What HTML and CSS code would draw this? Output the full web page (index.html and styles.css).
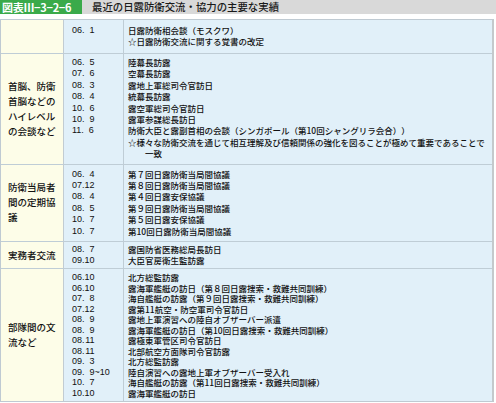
FILE: index.html
```html
<!DOCTYPE html>
<html lang="ja">
<head>
<meta charset="utf-8">
<link rel="stylesheet" href="styles.css">
</head>
<body>
<div class="header">
  <div class="fig">図表Ⅲ−3−2−6</div>
  <div class="title">最近の日露防衛交流・協力の主要な実績</div>
</div>
<div class="table">
  <div class="cat first r1"></div>
  <div class="dates first r1">
    <div>06.<span class="m">1</span></div>
  </div>
  <div class="items first r1">
    <div>日露防衛相会談（モスクワ）</div>
    <div>☆日露防衛交流に関する覚書の改定</div>
  </div>

  <div class="cat r2"><div>首脳、防衛<br>首脳などの<br>ハイレベル<br>の会談など</div></div>
  <div class="dates r2">
    <div>06.<span class="m">5</span></div>
    <div>07.<span class="m">6</span></div>
    <div>08.<span class="m">3</span></div>
    <div>08.<span class="m">4</span></div>
    <div>10.<span class="m">6</span></div>
    <div>10.<span class="m">9</span></div>
    <div>11.<span class="m">6</span></div>
  </div>
  <div class="items r2">
    <div>陸幕長訪露</div>
    <div>空幕長訪露</div>
    <div>露地上軍総司令官訪日</div>
    <div>統幕長訪露</div>
    <div>露空軍総司令官訪日</div>
    <div>露軍参謀総長訪日</div>
    <div>防衛大臣と露副首相の会談（シンガポール（第10回シャングリラ会合））</div>
    <div class="note">☆様々な防衛交流を通じて相互理解及び信頼関係の強化を図ることが極めて重要であることで<br>一致</div>
  </div>

  <div class="cat r3"><div>防衛当局者<br>間の定期協<br>議</div></div>
  <div class="dates r3">
    <div>06.<span class="m">4</span></div>
    <div>07.<span class="m">12</span></div>
    <div>08.<span class="m">4</span></div>
    <div>08.<span class="m">5</span></div>
    <div>10.<span class="m">7</span></div>
    <div>10.<span class="m">7</span></div>
  </div>
  <div class="items r3">
    <div>第７回日露防衛当局間協議</div>
    <div>第８回日露防衛当局間協議</div>
    <div>第４回日露安保協議</div>
    <div>第９回日露防衛当局間協議</div>
    <div>第５回日露安保協議</div>
    <div>第10回日露防衛当局間協議</div>
  </div>

  <div class="cat r4"><div>実務者交流</div></div>
  <div class="dates r4">
    <div>08.<span class="m">7</span></div>
    <div>09.<span class="m">10</span></div>
  </div>
  <div class="items r4">
    <div>露国防省医務総局長訪日</div>
    <div>大臣官房衛生監訪露</div>
  </div>

  <div class="cat r5"><div>部隊間の文<br>流など</div></div>
  <div class="dates r5">
    <div>06.<span class="m">10</span></div>
    <div>06.<span class="m">10</span></div>
    <div>07.<span class="m">8</span></div>
    <div>07.<span class="m">12</span></div>
    <div>08.<span class="m">9</span></div>
    <div>08.<span class="m">9</span></div>
    <div>08.<span class="m">11</span></div>
    <div>08.<span class="m">11</span></div>
    <div>09.<span class="m">3</span></div>
    <div>09.<span class="m">9</span>~10</div>
    <div>10.<span class="m">7</span></div>
    <div>10.<span class="m">10</span></div>
  </div>
  <div class="items r5">
    <div>北方総監訪露</div>
    <div>露海軍艦艇の訪日（第８回日露捜索・救難共同訓練）</div>
    <div>海自艦艇の訪露（第９回日露捜索・救難共同訓練）</div>
    <div>露第11航空・防空軍司令官訪日</div>
    <div>露地上軍演習への陸自オブザーバー派遣</div>
    <div>露海軍艦艇の訪日（第10回日露捜索・救難共同訓練）</div>
    <div>露極東軍管区司令官訪日</div>
    <div>北部航空方面隊司令官訪露</div>
    <div>北方総監訪露</div>
    <div>陸自演習への露地上軍オブザーバー受入れ</div>
    <div>海自艦艇の訪露（第11回日露捜索・救難共同訓練）</div>
    <div>露海軍艦艇の訪日</div>
  </div>
</div>
</body>
</html>
```

FILE: styles.css
```css
body {
  margin: 0;
  width: 496px;
  background: #ffffff;
  font-family: "Noto Sans CJK JP", "Liberation Sans", sans-serif;
  color: #111111;
  text-spacing-trim: space-all;
}

.header {
  display: flex;
  height: 14px;
  background: #d9d9d9;
}

.fig {
  width: 80px;
  padding-left: 2px;
  margin-right: 1px;
  background: #3aaa4a;
  color: #ffffff;
  font-size: 11px;
  line-height: 14px;
  font-weight: bold;
  letter-spacing: -0.3px;
  white-space: nowrap;
}

.title {
  padding-left: 9px;
  font-size: 10.4px;
  line-height: 14px;
  font-weight: 500;
  color: #1a1a1a;
  white-space: nowrap;
}

.table {
  margin-top: 5px;
  width: 494px;
  box-sizing: border-box;
  display: grid;
  grid-template-columns: 63px 60px 1fr;
  border: 1px solid #bfcad2;
  border-right: 2px solid #c4c9cc;
  background: #e1f0f9;
}

.cat,
.dates,
.items {
  border-top: 1px solid #bfcdd6;
}

.first {
  border-top: none;
}

.cat {
  display: flex;
  align-items: center;
  padding-left: 7px;
  background: #fdfde8;
  border-right: 1px solid #c2ccd2;
  font-size: 9.5px;
  line-height: 15px;
  font-weight: 500;
  white-space: nowrap;
}

.dates {
  padding-left: 8px;
  border-right: 1px solid #bfcdd6;
  font-family: "Liberation Sans", Arial, sans-serif;
  font-size: 9px;
  white-space: nowrap;
}

.m {
  display: inline-block;
  width: 10px;
  text-align: right;
}

.items {
  padding-left: 4px;
  font-size: 8.5px;
  font-weight: 500;
  white-space: nowrap;
}

.dates.r1,
.items.r1 {
  padding-top: 5px;
  padding-bottom: 6px;
  line-height: 11px;
}

.dates.r2,
.items.r2 {
  padding-top: 3px;
  padding-bottom: 4px;
  line-height: 11.4px;
}

.dates.r3,
.items.r3 {
  padding-top: 4px;
  padding-bottom: 4px;
  line-height: 11.4px;
}

.dates.r4,
.items.r4 {
  padding-top: 2px;
  padding-bottom: 2px;
  line-height: 11px;
}

.dates.r5,
.items.r5 {
  padding-top: 3px;
  padding-bottom: 3px;
  line-height: 10.5px;
}

.note {
  padding-left: 2em;
  text-indent: -2em;
}
```
